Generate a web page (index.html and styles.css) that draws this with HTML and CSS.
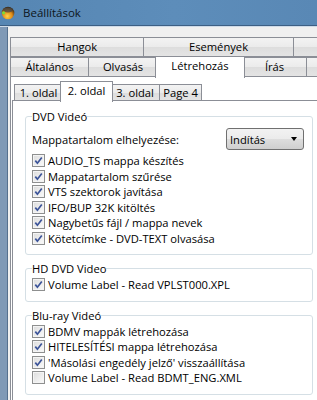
FILE: index.html
```html
<!DOCTYPE html>
<html lang="hu">

<head>
    <meta charset="UTF-8">
    <title>Beállítások</title>
    <link rel="stylesheet" href="styles.css">
</head>

<body>
    <div class="titlebar">
        <svg class="app-icon" width="14" height="14" viewBox="0 0 14 14">
            <defs>
                <radialGradient id="ball" cx="0.45" cy="0.75" r="0.7">
                    <stop offset="0" stop-color="#ffd34a" />
                    <stop offset="0.55" stop-color="#e08a16" />
                    <stop offset="1" stop-color="#3b2a14" />
                </radialGradient>
            </defs>
            <circle cx="7" cy="7" r="6.3" fill="url(#ball)" />
            <ellipse cx="7" cy="4" rx="4.5" ry="2.4" fill="#4a4a4a" opacity="0.75" />
            <circle cx="2.6" cy="6.8" r="1.6" fill="#7bdc3c" />
        </svg>
        <span class="title">Beállítások</span>
    </div>

    <div class="window">
        <div class="frame"></div>
        <div class="client">
            <div class="tabs">
                <div class="tab-row">
                    <a class="tab" style="width:138px">Hangok</a>
                    <a class="tab" style="width:154px">Események</a>
                    <a class="tab" style="width:60px"></a>
                </div>
                <div class="tab-row row-front">
                    <a class="tab" style="width:79px">Általános</a>
                    <a class="tab" style="width:70px">Olvasás</a>
                    <a class="tab active" style="width:90px">Létrehozás</a>
                    <a class="tab" style="width:65px">Írás</a>
                    <a class="tab" style="width:40px"></a>
                </div>
                <div class="panel">
                    <div class="tab-row sub-row">
                        <a class="tab sub" style="width:49px">1. oldal</a>
                        <a class="tab sub active" style="width:53px">2. oldal</a>
                        <a class="tab sub" style="width:50px">3. oldal</a>
                        <a class="tab sub" style="width:43px">Page 4</a>
                    </div>
                    <div class="page">
                        <fieldset class="group">
                            <legend>DVD Videó</legend>
                            <div class="field-row">
                                <span>Mappatartalom elhelyezése:</span>
                                <div class="combo">
                                    <span>Indítás</span>
                                    <span class="arrow"></span>
                                </div>
                            </div>
                            <label class="check on">AUDIO_TS mappa készítés</label>
                            <label class="check on">Mappatartalom szűrése</label>
                            <label class="check on">VTS szektorok javítása</label>
                            <label class="check on">IFO/BUP 32K kitöltés</label>
                            <label class="check on">Nagybetűs fájl / mappa nevek</label>
                            <label class="check on">Kötetcímke - DVD-TEXT olvasása</label>
                        </fieldset>

                        <fieldset class="group">
                            <legend>HD DVD Video</legend>
                            <label class="check on">Volume Label - Read VPLST000.XPL</label>
                        </fieldset>

                        <fieldset class="group">
                            <legend>Blu-ray Videó</legend>
                            <label class="check on">BDMV mappák létrehozása</label>
                            <label class="check on">HITELESÍTÉSI mappa létrehozása</label>
                            <label class="check on">'Másolási engedély jelző' visszaállítása</label>
                            <label class="check">Volume Label - Read BDMT_ENG.XML</label>
                        </fieldset>
                    </div>
                </div>
            </div>
        </div>
    </div>
</body>

</html>
```

FILE: styles.css
```css
body {
    margin: 0;
    width: 317px;
    height: 400px;
    overflow: hidden;
    font-family: "Open Sans", "Noto Sans", sans-serif;
    font-size: 11.2px;
    color: #000;
    background: #f0f0f0;
}

.titlebar {
    box-sizing: border-box;
    height: 26px;
    display: flex;
    align-items: center;
    gap: 8px;
    padding-left: 1px;
    background-color: #5a8ab7;
    background-image: linear-gradient(to right, #5686b3, #5d8dba 55%, #5988b5);
    border-bottom: 1px solid #3c5f84;
}

.title {
    font-size: 11.5px;
    color: #0e1620;
}

.window {
    display: flex;
    height: 374px;
    border-top: 1px solid #cfdbe8;
}

.frame {
    width: 7px;
    background-color: #7f99b6;
    border-right: 1px solid #55708e;
}

.client {
    flex: 1;
    padding: 10px 0 0 2px;
    background: #f0f0f0;
    overflow: hidden;
}

.tabs {
    width: 340px;
}

.tab-row {
    display: flex;
    align-items: flex-end;
}

.row-front {
    margin-top: -1px;
}

.tab {
    box-sizing: border-box;
    height: 20px;
    line-height: 18px;
    margin-right: -1px;
    border: 1px solid #8b8e96;
    background: linear-gradient(#f3f3f3, #ebebeb 50%, #dddddd 51%, #e4e4e4);
    text-align: center;
    white-space: nowrap;
    color: #000;
}

.tab.active {
    position: relative;
    z-index: 2;
    height: 22px;
    margin: 0 -3px -1px -2px;
    border-bottom: none;
    background: #fff;
}

.panel {
    position: relative;
    z-index: 1;
    margin-top: -1px;
    height: 330px;
    padding: 4px 0 0 1px;
    border: 1px solid #8b8e96;
    background: #fff;
}

.sub-row {
    padding-left: 2px;
}

.tab.sub {
    height: 17px;
    line-height: 15px;
}

.tab.sub.active {
    height: 21px;
    line-height: 17px;
}

.page {
    margin-top: -1px;
    height: 300px;
    padding: 7px 0 0 12px;
    border: 1px solid #8b8e96;
    background: #fff;
}

.group {
    width: 288px;
    box-sizing: border-box;
    margin: 0 0 5px;
    padding: 0 6px 8px;
    border: 1px solid #d5dfe5;
    border-radius: 3px;
}

.group legend {
    padding: 0;
    margin-left: 0;
    line-height: 17px;
}

.field-row {
    display: flex;
    align-items: center;
    justify-content: space-between;
    height: 28px;
    padding-right: 2px;
}

.combo {
    box-sizing: border-box;
    width: 78px;
    height: 22px;
    display: flex;
    align-items: center;
    justify-content: space-between;
    padding: 0 6px 0 3px;
    border: 1px solid #707070;
    border-radius: 3px;
    background: linear-gradient(#f2f2f2, #ebebeb 50%, #dddddd 51%, #cfcfcf);
}

.arrow {
    width: 0;
    height: 0;
    border-left: 3.5px solid transparent;
    border-right: 3.5px solid transparent;
    border-top: 4px solid #000;
}

.check {
    display: flex;
    align-items: center;
    gap: 3px;
    height: 15.5px;
    white-space: nowrap;
}

.check::before {
    content: "";
    flex: none;
    width: 13px;
    height: 13px;
    box-sizing: border-box;
    border: 1px solid #8e8f8f;
    background: linear-gradient(135deg, #dcdcdc, #fbfbfb);
    box-shadow: inset 0 0 0 1px #f4f4f4;
}

.check.on::before {
    background:
        url("data:image/svg+xml,%3Csvg xmlns='http://www.w3.org/2000/svg' width='11' height='11'%3E%3Cpath d='M2.3 5.6 L4.4 8.2 L8.8 2.4' fill='none' stroke='%233c5499' stroke-width='1.7'/%3E%3C/svg%3E") center no-repeat,
        linear-gradient(135deg, #dcdcdc, #fbfbfb);
}
```
